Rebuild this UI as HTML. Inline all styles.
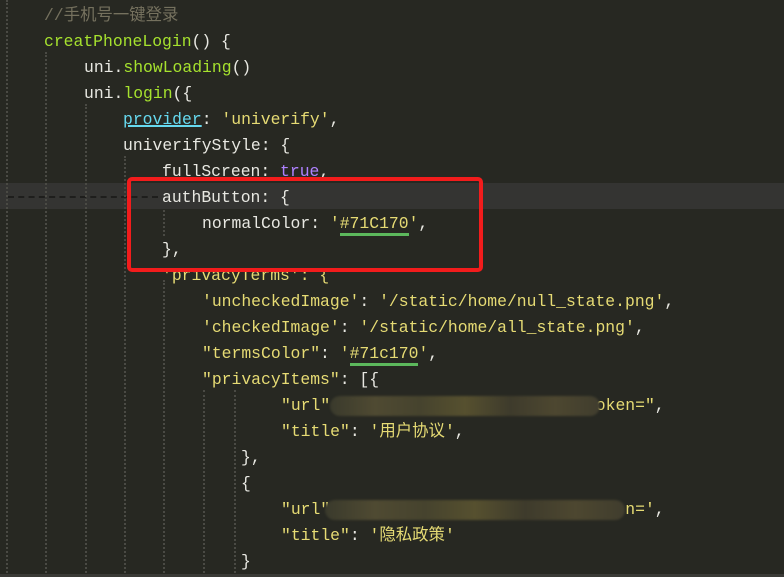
<!DOCTYPE html>
<html><head><meta charset="utf-8"><style>
html,body{margin:0;padding:0;}
body{width:784px;height:577px;background:#272822;position:relative;overflow:hidden;font-family:"Liberation Mono","Noto Sans CJK SC",monospace;font-size:16.4px;color:#e8e8e2;}
.l{position:absolute;white-space:pre;line-height:26px;height:26px;margin-top:2px;}
.g{position:absolute;width:0;border-left:2px dotted #4a4a44;}
.c{color:#75715e}.f{color:#a6e22e}.s{color:#e6db74}.p{color:#ae81ff}.k{color:#66d9ef}
.hl{position:absolute;left:0;top:183px;width:784px;height:26px;background:#343432;}
.box{position:absolute;left:127px;top:177px;width:348px;height:87px;border:4px solid #f21c1c;border-radius:5px;}
.blur{position:absolute;height:20px;border-radius:10px;background:linear-gradient(90deg,#3a3a2c,#4f4a32,#46432e,#56502f,#3e3b2c,#4d4730,#403d2e);filter:blur(1px);}
</style></head><body>
<div class="hl"></div>
<div style="position:absolute;left:8px;top:196px;width:150px;border-top:2px dashed #1e1e1c;"></div>
<div class="g" style="left:6px;top:0;height:577px"></div>
<div class="g" style="left:45px;top:52px;height:525px"></div>
<div class="g" style="left:85px;top:104px;height:473px"></div>
<div class="g" style="left:124px;top:156px;height:421px"></div>
<div class="g" style="left:163px;top:280px;height:297px"></div>
<div class="g" style="left:203px;top:390px;height:187px"></div>
<div class="g" style="left:234px;top:390px;height:187px"></div>
<div class="g" style="left:163px;top:210px;height:26px"></div>
<div class="l c" style="left:44px;top:1px">//手机号一键登录</div>
<div class="l" style="left:44px;top:27px"><span class="f">creatPhoneLogin</span>() {</div>
<div class="l" style="left:84px;top:53px">uni.<span class="f">showLoading</span>()</div>
<div class="l" style="left:84px;top:79px">uni.<span class="f">login</span>({</div>
<div class="l" style="left:123px;top:105px"><span class="k" style="text-decoration:underline;text-decoration-thickness:2px;">provider</span>: <span class="s">'univerify'</span>,</div>
<div class="l" style="left:123px;top:131px">univerifyStyle: {</div>
<div class="l" style="left:162px;top:157px">fullScreen: <span class="p">true</span>,</div>
<div class="l" style="left:162px;top:183px">authButton: {</div>
<div class="l" style="left:202px;top:209px">normalColor: <span class="s">'<span style="border-bottom:3px solid #5cb85c">#71C170</span>'</span>,</div>
<div class="l" style="left:162px;top:235px">},</div>
<div class="l s" style="left:162px;top:261px">'privacyTerms': {</div>
<div class="l s" style="left:202px;top:287px">'uncheckedImage'<span style="color:#e8e8e2">: </span>'/static/home/null_state.png'<span style="color:#e8e8e2">,</span></div>
<div class="l s" style="left:202px;top:313px">'checkedImage'<span style="color:#e8e8e2">: </span>'/static/home/all_state.png'<span style="color:#e8e8e2">,</span></div>
<div class="l s" style="left:202px;top:339px">"termsColor"<span style="color:#e8e8e2">: </span>'<span style="border-bottom:3px solid #5cb85c">#71c170</span>'<span style="color:#e8e8e2">,</span></div>
<div class="l s" style="left:202px;top:365px">"privacyItems"<span style="color:#e8e8e2">: [{</span></div>
<div class="l s" style="left:281px;top:391px">"url"<span style="color:#e8e8e2">: </span>"                        oken="<span style="color:#e8e8e2">,</span></div>
<div class="l s" style="left:281px;top:417px">"title"<span style="color:#e8e8e2">: </span>'用户协议'<span style="color:#e8e8e2">,</span></div>
<div class="l" style="left:241px;top:443px">},</div>
<div class="l" style="left:241px;top:469px">{</div>
<div class="l s" style="left:281px;top:495px">"url"<span style="color:#e8e8e2">:                             </span>n='<span style="color:#e8e8e2">,</span></div>
<div class="l s" style="left:281px;top:521px">"title"<span style="color:#e8e8e2">: </span>'隐私政策'</div>
<div class="l" style="left:241px;top:547px">}</div>
<div class="blur" style="left:330px;top:396px;width:270px;"></div>
<div class="blur" style="left:325px;top:500px;width:300px;"></div>
<div class="box"></div>
<div style="position:absolute;left:0;top:574px;width:784px;height:3px;background:#3a3a36"></div>
</body></html>
